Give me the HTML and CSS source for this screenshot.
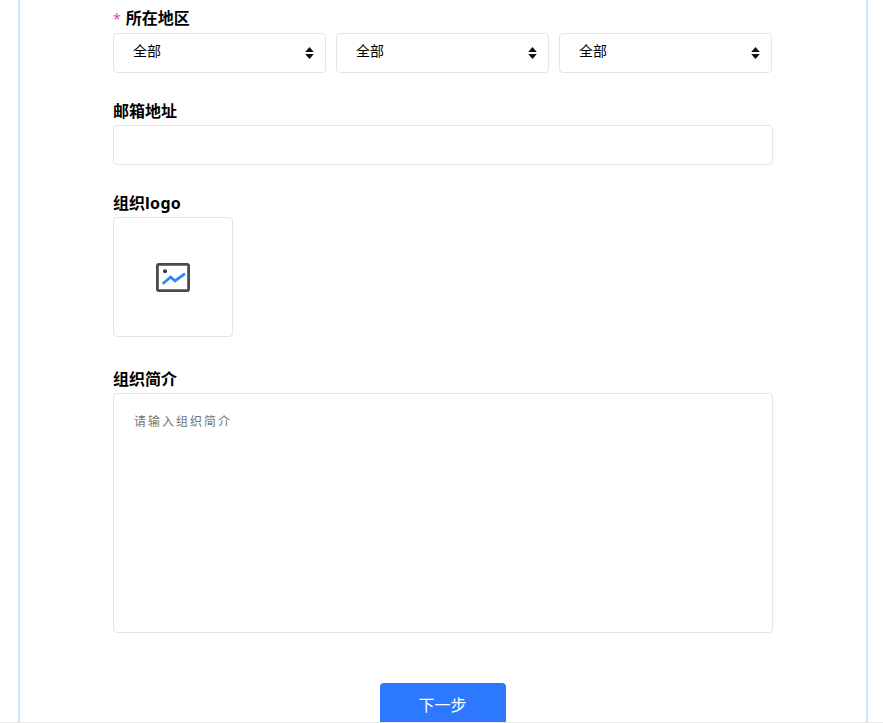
FILE: index.html
```html
<!DOCTYPE html>
<html lang="zh-CN">
<head>
<meta charset="utf-8">
<title>组织信息</title>
<link rel="stylesheet" href="styles.css">
</head>
<body>
<main class="card">
  <form class="form">
    <div class="group">
      <label class="label"><span class="star">*</span>所在地区</label>
      <div class="selects">
        <div class="select"><span>全部</span><svg class="arrows" viewBox="0 0 9 12" width="9" height="12"><path d="M4.5 0 8.8 5H.2zM4.5 12 .2 7h8.6z"/></svg></div>
        <div class="select"><span>全部</span><svg class="arrows" viewBox="0 0 9 12" width="9" height="12"><path d="M4.5 0 8.8 5H.2zM4.5 12 .2 7h8.6z"/></svg></div>
        <div class="select"><span>全部</span><svg class="arrows" viewBox="0 0 9 12" width="9" height="12"><path d="M4.5 0 8.8 5H.2zM4.5 12 .2 7h8.6z"/></svg></div>
      </div>
    </div>
    <div class="group">
      <label class="label">邮箱地址</label>
      <input class="input" type="text">
    </div>
    <div class="group group-logo">
      <label class="label">组织<span class="latin">logo</span></label>
      <div class="upload">
        <svg viewBox="0 0 34 29" width="34" height="29" fill="none">
          <rect x="1.4" y="1.4" width="31.2" height="26.2" rx="1.5" stroke="#4a4a4a" stroke-width="2.8"/>
          <circle cx="9" cy="8.3" r="2" fill="#33384a"/>
          <path d="M6.7 20.7 14.7 14 19 18 29 10.7" stroke="#2e86f5" stroke-width="2.8"/>
        </svg>
      </div>
    </div>
    <div class="group group-text">
      <label class="label">组织简介</label>
      <textarea class="textarea" placeholder="请输入组织简介"></textarea>
    </div>
    <div class="actions"><button class="next" type="button">下一步</button></div>
  </form>
</main>
</body>
</html>
```
FILE: styles.css
```css
* { box-sizing: border-box; }
html, body { margin: 0; height: 723px; overflow: hidden; background: #fff; }
body {
  position: relative;
  font-family: "Open Sans", "Noto Sans CJK SC", sans-serif;
  color: #000;
}
body::after {
  content: "";
  position: absolute;
  left: 0;
  right: 0;
  bottom: 0;
  height: 1px;
  background: #e6e6e6;
}
.card {
  width: 850px;
  height: 723px;
  margin-left: 18px;
  padding: 7px 93px 0;
  border-left: 2px solid #c8e8fb;
  border-right: 2px solid #c8e8fb;
}
.form { width: 660px; }
.group { margin-bottom: 28px; }
.group-logo { margin-bottom: 32px; }
.group-text { margin-bottom: 50px; }
.label {
  display: block;
  height: 26px;
  font-size: 16px;
  font-weight: 700;
  line-height: 22px;
}
.group:not(:first-child) .label { height: 24px; line-height: 20px; }
.latin { font-family: "Noto Sans", sans-serif; letter-spacing: .3px; }
.star { margin-right: 5px; color: #d9479a; font-size: 14px; font-weight: 400; }
.selects { display: flex; gap: 10px; width: 659px; }
.select {
  flex: 1;
  height: 40px;
  display: flex;
  align-items: center;
  justify-content: space-between;
  padding: 0 11px 6px 19px;
  border: 1px solid #e5e5e5;
  border-radius: 4px;
  font-size: 14px;
}
.arrows { margin-top: 6px; fill: #111; }
.input {
  display: block;
  width: 100%;
  height: 40px;
  border: 1px solid #e5e5e5;
  border-radius: 4px;
  outline: none;
}
.upload {
  width: 120px;
  height: 120px;
  display: flex;
  align-items: center;
  justify-content: center;
  padding-top: 1px;
  border: 1px solid #e5e5e5;
  border-radius: 4px;
}
.textarea {
  display: block;
  width: 100%;
  height: 240px;
  padding: 18px 20px;
  border: 1px solid #e5e5e5;
  border-radius: 4px;
  outline: none;
  resize: none;
  font-family: inherit;
  font-size: 12px;
  letter-spacing: 2px;
}
.textarea::placeholder { color: #757575; opacity: 1; }
.actions { display: flex; justify-content: center; }
.next {
  width: 126px;
  height: 40px;
  padding: 2px 7px 0 6px;
  border: 0;
  border-radius: 4px 4px 0 0;
  background: #2c78ff;
  color: #fff;
  font-family: inherit;
  font-size: 16px;
}
```
